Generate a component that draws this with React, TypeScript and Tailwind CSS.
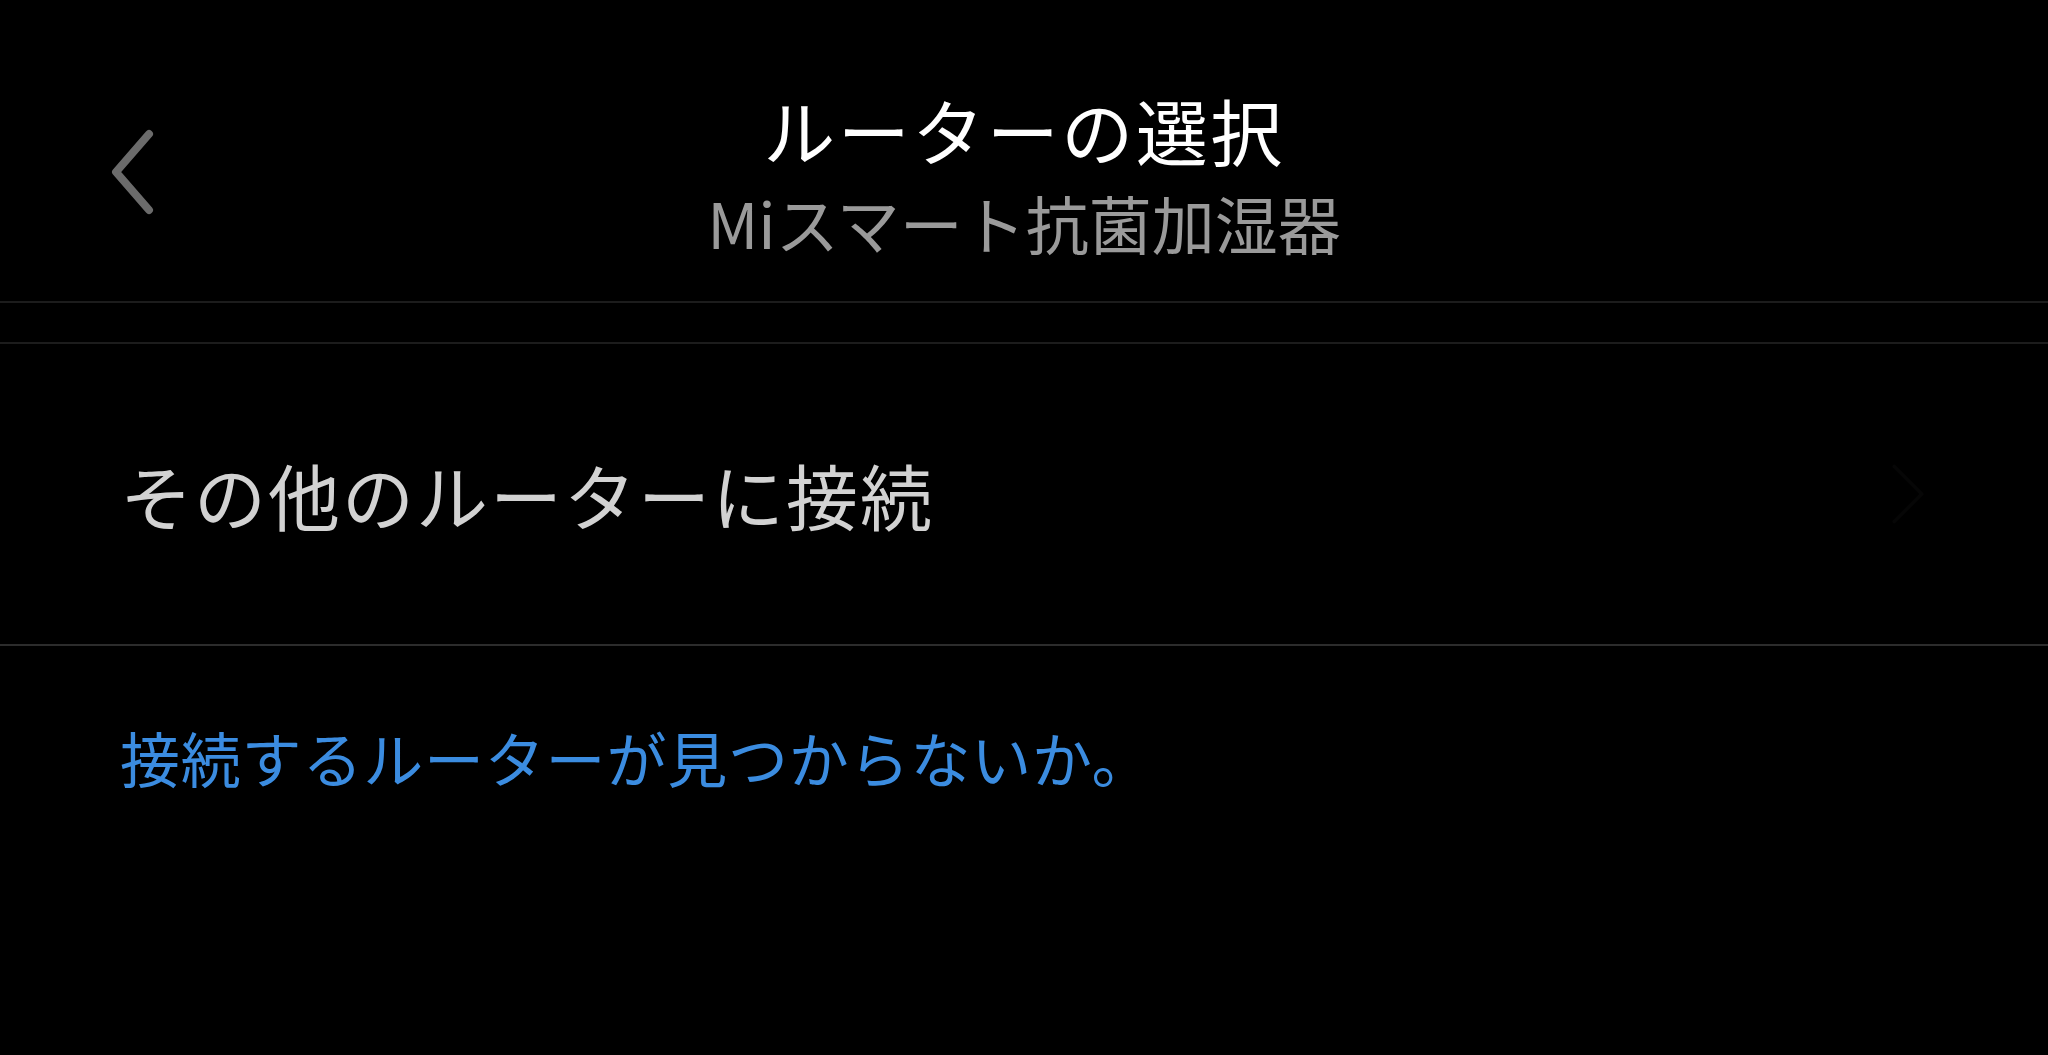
import { ChevronRight } from "lucide-react";

const FONT = { fontFamily: '"Noto Sans CJK JP", "Noto Sans", sans-serif' };

// ── Back chevron ──────────────────────────────────────────────────────────────

function BackChevron() {
  return (
    <svg width="52" height="86" viewBox="0 0 52 86" fill="none">
      <path
        d="M41 5 L8 43 L41 81"
        stroke="#6b6b6b"
        strokeWidth="8"
        strokeLinecap="round"
        strokeLinejoin="round"
      />
    </svg>
  );
}

// ── Main ──────────────────────────────────────────────────────────────────────

export default function App() {
  return (
    <div className="w-[2048px] h-[1055px] bg-black overflow-hidden" style={FONT}>

      {/* Header */}
      <div className="relative h-[301px] flex flex-col items-center pt-[89px]">
        <button className="absolute left-[108px] top-[129px]">
          <BackChevron />
        </button>
        <div className="text-[72px] leading-[80px] tracking-[2.5px] text-white">ルーターの選択</div>
        <div className="mt-[17px] text-[63px] leading-[72px] text-[#9a9a9a]">
          Miスマート抗菌加湿器
        </div>
      </div>

      <div className="h-[2px] bg-[#1c1c1c]" />
      <div className="h-[39px]" />
      <div className="h-[2px] bg-[#1c1c1c]" />

      {/* Other router row */}
      <div className="h-[300px] flex items-center justify-between pl-[120px] pr-[85px]">
        <div className="text-[72px] leading-[80px] tracking-[2px] text-[#d2d2d2]">その他のルーターに接続</div>
        <ChevronRight className="w-[110px] h-[110px] text-[#060606]" strokeWidth={0.8} />
      </div>

      <div className="h-[2px] bg-[#2c2c2c]" />

      {/* Help link */}
      <div className="pt-[75px] pl-[120px]">
        <div className="text-[60px] leading-[72px] tracking-[0.8px] text-[#3b8ce0]">
          接続するルーターが見つからないか。
        </div>
      </div>
    </div>
  );
}
